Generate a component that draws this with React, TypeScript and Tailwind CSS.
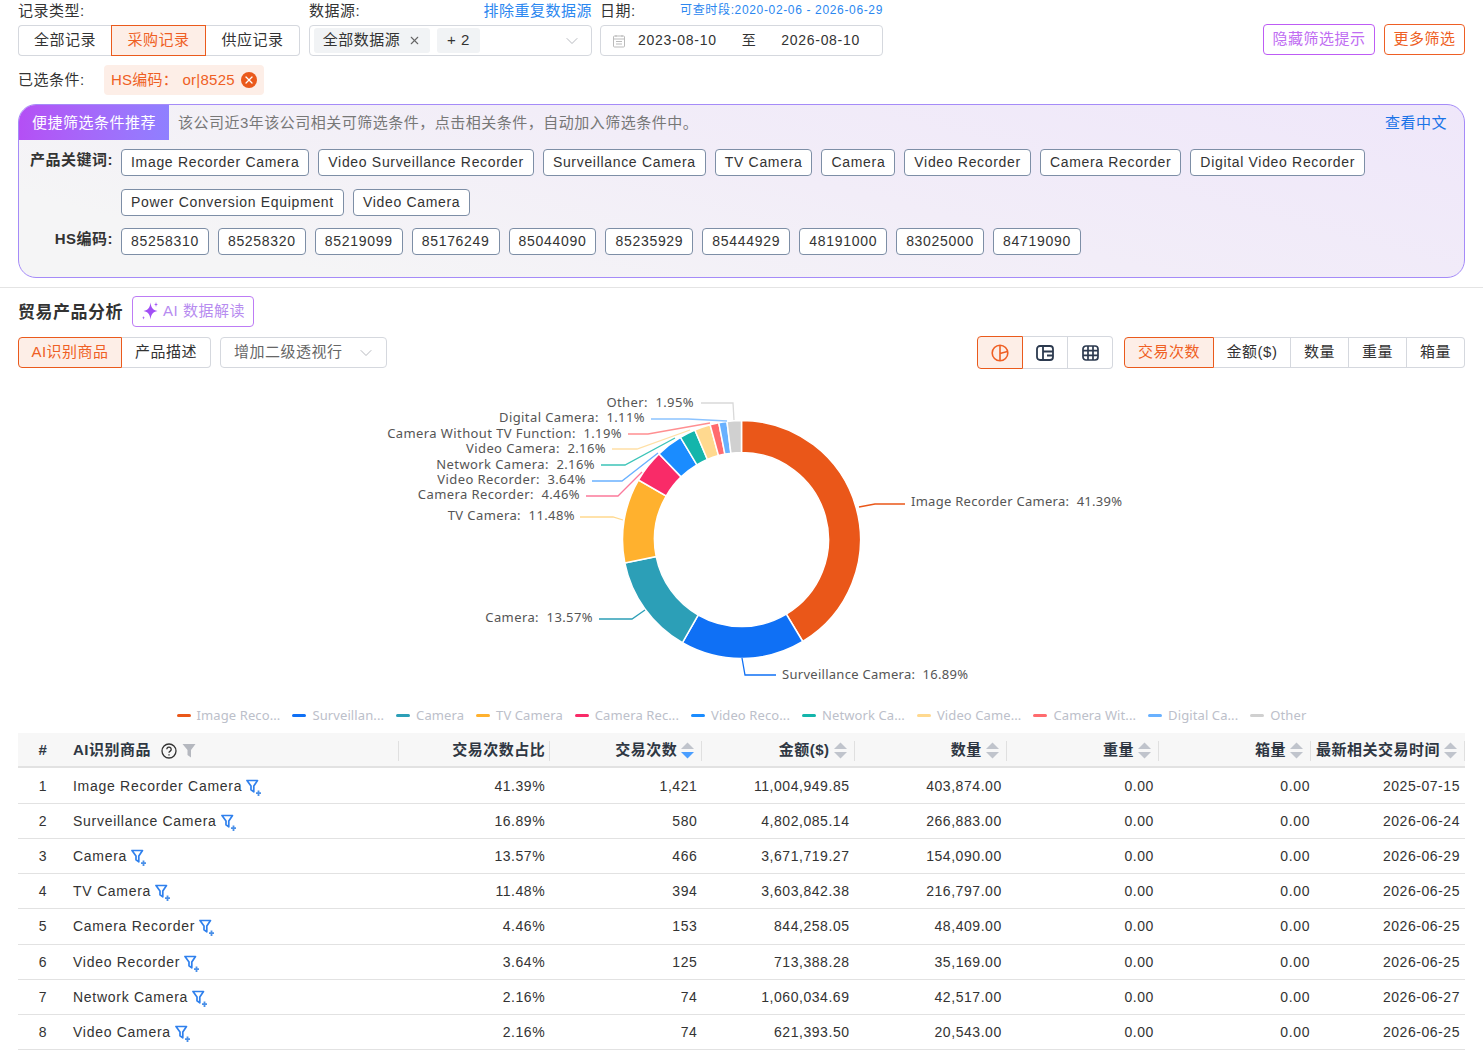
import React from 'react';
import { ChevronDown, X } from 'lucide-react';

const slices = [
  { name: 'Image Recorder Camera', short: 'Image Reco...', pct: 41.39, color: '#ea5719' },
  { name: 'Surveillance Camera', short: 'Surveillan...', pct: 16.89, color: '#0f70f5' },
  { name: 'Camera', short: 'Camera', pct: 13.57, color: '#2c9fb7' },
  { name: 'TV Camera', short: 'TV Camera', pct: 11.48, color: '#ffb12e' },
  { name: 'Camera Recorder', short: 'Camera Rec...', pct: 4.46, color: '#f92b68' },
  { name: 'Video Recorder', short: 'Video Reco...', pct: 3.64, color: '#1a8cff' },
  { name: 'Network Camera', short: 'Network Ca...', pct: 2.16, color: '#14b5ab' },
  { name: 'Video Camera', short: 'Video Came...', pct: 2.16, color: '#ffd98f' },
  { name: 'Camera Without TV Function', short: 'Camera Wit...', pct: 1.19, color: '#ff6b6e' },
  { name: 'Digital Camera', short: 'Digital Ca...', pct: 1.11, color: '#69b1ff' },
  { name: 'Other', short: 'Other', pct: 1.95, color: '#d0d0d0' },
];

// label text anchor + leader line, in page coordinates (svg viewBox starts at y=369)
const labels = [
  { i: 0, x: 911, y: 506, anchor: 'start', line: '905,504 875,504 859,507', color: '#ea5719' },
  { i: 1, x: 782, y: 679, anchor: 'start', line: '776,675 745,675 742,658', color: '#0f70f5' },
  { i: 2, x: 593, y: 622, anchor: 'end', line: '599,619 632,619 645,610', color: '#2c9fb7' },
  { i: 3, x: 575, y: 520, anchor: 'end', line: '580,517 613,517 623,520', color: '#ffd98f' },
  { i: 4, x: 580, y: 499, anchor: 'end', line: '586,496 618,496 642,472', color: '#fb7a9b' },
  { i: 5, x: 586, y: 484, anchor: 'end', line: '592,481 622,481 658,453', color: '#69b1ff' },
  { i: 6, x: 595, y: 469, anchor: 'end', line: '601,465 625,465 675,438', color: '#3cc4b8' },
  { i: 7, x: 606, y: 453, anchor: 'end', line: '612,449 637,449 690,430', color: '#ffe0a6' },
  { i: 8, x: 622, y: 438, anchor: 'end', line: '628,434 648,434 710,423', color: '#ff8f91' },
  { i: 9, x: 645, y: 422, anchor: 'end', line: '651,419 688,419 727,421', color: '#8cc3ff' },
  { i: 10, x: 694, y: 407, anchor: 'end', line: '701,403 733,403 734,420', color: '#d9d9d9' },
];

const kwRow1 = ['Image Recorder Camera', 'Video Surveillance Recorder', 'Surveillance Camera', 'TV Camera', 'Camera', 'Video Recorder', 'Camera Recorder', 'Digital Video Recorder'];
const kwRow2 = ['Power Conversion Equipment', 'Video Camera'];
const hsCodes = ['85258310', '85258320', '85219099', '85176249', '85044090', '85235929', '85444929', '48191000', '83025000', '84719090'];

const rows = [
  ['1', 'Image Recorder Camera', '41.39%', '1,421', '11,004,949.85', '403,874.00', '0.00', '0.00', '2025-07-15'],
  ['2', 'Surveillance Camera', '16.89%', '580', '4,802,085.14', '266,883.00', '0.00', '0.00', '2026-06-24'],
  ['3', 'Camera', '13.57%', '466', '3,671,719.27', '154,090.00', '0.00', '0.00', '2026-06-29'],
  ['4', 'TV Camera', '11.48%', '394', '3,603,842.38', '216,797.00', '0.00', '0.00', '2026-06-25'],
  ['5', 'Camera Recorder', '4.46%', '153', '844,258.05', '48,409.00', '0.00', '0.00', '2026-06-25'],
  ['6', 'Video Recorder', '3.64%', '125', '713,388.28', '35,169.00', '0.00', '0.00', '2026-06-25'],
  ['7', 'Network Camera', '2.16%', '74', '1,060,034.69', '42,517.00', '0.00', '0.00', '2026-06-27'],
  ['8', 'Video Camera', '2.16%', '74', '621,393.50', '20,543.00', '0.00', '0.00', '2026-06-25'],
];

const sortCols = ['交易次数', '金额($)', '数量', '重量', '箱量', '最新相关交易时间'];

const marks = [
  [815, 125], [525, 350], [820, 350], [265, 520], [525, 525], [820, 515], [1095, 520], [1370, 520],
  [270, 685], [545, 685], [1100, 685], [1375, 685], [270, 875], [545, 875], [830, 865], [1100, 875], [1370, 875],
];

function arc(start: number, end: number) {
  const cx = 741.5, cy = 539.5, r1 = 119, r0 = 87;
  const p = (r: number, a: number) => {
    const t = (a / 100) * Math.PI * 2;
    return `${(cx + r * Math.sin(t)).toFixed(2)} ${(cy - r * Math.cos(t)).toFixed(2)}`;
  };
  const large = end - start > 50 ? 1 : 0;
  return `M${p(r1, start)}A${r1} ${r1} 0 ${large} 1 ${p(r1, end)}L${p(r0, end)}A${r0} ${r0} 0 ${large} 0 ${p(r0, start)}Z`;
}

function FilterPlus() {
  return (
    <svg width="16" height="18" viewBox="0 0 16 18" className="ml-[4px] mt-[3px] shrink-0">
      <path d="M1 1.5h10.5L7.8 7v5.8L5 10.8V7Z" fill="none" stroke="#2f80ed" strokeWidth="1.7" strokeLinejoin="round" />
      <path d="M12.5 11.5v5.5M10 14.2h5" stroke="#4a90e8" strokeWidth="1.8" />
    </svg>
  );
}

function SortCaret({ active }: { active?: boolean }) {
  return (
    <svg width="13" height="17" viewBox="0 0 13 17" className="shrink-0">
      <path d="M6.5 0.5 13 7H0Z" fill="#c0c4cc" />
      <path d="M6.5 16.5 0 10h13Z" fill={active ? '#4a9eff' : '#c0c4cc'} />
    </svg>
  );
}

function Tag({ children, code }: { children: React.ReactNode; code?: boolean }) {
  return (
    <span className={`flex h-[27px] items-center whitespace-nowrap rounded-[4px] border border-[#7d8ea6] bg-white px-[9px] text-[14px] text-[#333] ${code ? 'tracking-[0.7px]' : 'tracking-[0.68px]'}`}>
      {children}
    </span>
  );
}

export default function App() {
  let acc = 0;
  return (
    <div
      className="relative h-[1055px] overflow-hidden bg-white text-[14px] tracking-[0.5px] text-[#333]"
      style={{ fontFamily: '"Liberation Sans", "Noto Sans CJK SC", sans-serif' }}
    >
      {/* filter row */}
      <div className="flex px-[18px]">
        <div className="w-[282px]">
          <div className="h-[25px] pt-[1px] text-[15px] leading-[20px]">记录类型:</div>
          <div className="flex h-[31px] text-[15px]">
            <div className="flex w-[93px] items-center justify-center rounded-l-[4px] border border-r-0 border-[#d5d8de]">全部记录</div>
            <div className="flex w-[95px] items-center justify-center border border-[#ea5a1c] bg-[#fdeee7] text-[#ef5f24]">采购记录</div>
            <div className="flex w-[94px] items-center justify-center rounded-r-[4px] border border-l-0 border-[#d5d8de]">供应记录</div>
          </div>
        </div>
        <div className="ml-[9px] w-[283px]">
          <div className="flex h-[25px] justify-between pt-[1px] text-[15px] leading-[20px]">
            <span>数据源:</span>
            <span className="text-[#2b87f0]">排除重复数据源</span>
          </div>
          <div className="flex h-[31px] items-center rounded-[4px] border border-[#d5d8de] pl-[4px] pr-[9px] text-[15px]">
            <span className="flex h-[25px] w-[116px] items-center justify-center gap-[8px] rounded-[3px] bg-[#f1f3f5]">
              全部数据源 <X size={13} className="text-[#666]" />
            </span>
            <span className="ml-[7px] flex h-[25px] w-[43px] items-center justify-center rounded-[3px] bg-[#f1f3f5]">+ 2</span>
            <ChevronDown size={20} strokeWidth={1} className="ml-auto text-[#a8abb2]" />
          </div>
        </div>
        <div className="ml-[8px] w-[283px]">
          <div className="flex h-[25px] items-start justify-between text-[15px] leading-[20px]">
            <span className="pt-[1px]">日期:</span>
            <span className="text-[12px] tracking-[0.65px] text-[#2b87f0]">可查时段:2020-02-06 - 2026-06-29</span>
          </div>
          <div className="flex h-[31px] items-center rounded-[4px] border border-[#d5d8de] pl-[11px] tracking-[0.7px]">
            <svg width="14" height="14" viewBox="0 0 14 14" fill="none" stroke="#bbb" strokeWidth="1">
              <rect x="1.5" y="2" width="11" height="11" rx="1" />
              <path d="M1.5 5h11M4 7.5h6M4 10h6M4 1v2M10 1v2" />
            </svg>
            <span className="ml-[12px]">2023-08-10</span>
            <span className="ml-[25px]">至</span>
            <span className="ml-[25px]">2026-08-10</span>
          </div>
        </div>
        <div className="ml-auto mt-[24px] flex h-[31px] gap-[9px] text-[15px]">
          <span className="flex w-[112px] items-center justify-center rounded-[4px] border border-[#bd5cf5] text-[#c06df2]">隐藏筛选提示</span>
          <span className="flex w-[81px] items-center justify-center rounded-[4px] border border-[#ee5f24] text-[#ee5f24]">更多筛选</span>
        </div>
      </div>

      {/* selected */}
      <div className="ml-[18px] mt-[9px] flex h-[30px] items-center text-[15px]">
        <span className="w-[86px]">已选条件:</span>
        <span className="flex h-[30px] w-[160px] items-center gap-[6px] rounded-[4px] bg-[#fdeee7] pl-[7px] tracking-[0.25px] text-[#ef5f24]">
          <span className="whitespace-pre">HS编码： or|8525</span>
          <span className="flex h-[16px] w-[16px] items-center justify-center rounded-full bg-[#ea5a1c]">
            <X size={12} strokeWidth={2.5} className="text-white" />
          </span>
        </span>
      </div>

      {/* recommend panel */}
      <div className="mx-[18px] mt-[9px] h-[174px] overflow-hidden rounded-[18px] border border-[#a58bf8] bg-[linear-gradient(195deg,#efe7fa_0%,#f2edf8_45%,#f5f5f6_85%)]">
        <div className="flex h-[35px] items-center pt-[1px]">
          <div className="-mt-[1px] flex h-[35px] w-[150px] items-center justify-center bg-gradient-to-r from-[#b44ff5] to-[#8f80ff] pt-[1px] text-[15px] text-white">便捷筛选条件推荐</div>
          <span className="ml-[9px] text-[15px] text-[#777]">该公司近3年该公司相关可筛选条件，点击相关条件，自动加入筛选条件中。</span>
          <span className="ml-auto mr-[17px] text-[15px] text-[#1a73e8]">查看中文</span>
        </div>
        <div className="mt-[9px] flex">
          <div className="w-[94px] text-right text-[15px] font-bold">产品关键词:</div>
          <div className="ml-[8px] flex flex-col gap-[13px]">
            <div className="flex gap-[9px]">{kwRow1.map((k) => <Tag key={k}>{k}</Tag>)}</div>
            <div className="flex gap-[9px]">{kwRow2.map((k) => <Tag key={k}>{k}</Tag>)}</div>
          </div>
        </div>
        <div className="mt-[12px] flex">
          <div className="w-[94px] text-right text-[15px] font-bold">HS编码:</div>
          <div className="ml-[8px] flex gap-[9px]">
            {hsCodes.map((k) => <Tag key={k} code>{k}</Tag>)}
          </div>
        </div>
      </div>

      <div className="mt-[9px] h-px bg-[#e4e4e4]" />

      {/* section head */}
      <div className="ml-[18px] mt-[7.5px] flex h-[32.5px] items-start">
        <span className="pt-[1px] text-[17px] font-bold leading-[32px]">贸易产品分析</span>
        <span className="ml-[9px] flex h-[31px] w-[122px] items-center justify-center gap-[4px] rounded-[4px] border border-[#bd7cf5] text-[15px] text-[#b78cf0]">
          <svg width="18" height="20" viewBox="0 0 18 20">
            <path d="M9.5 1.5C10.3 7 11.5 8.8 16.5 10 11.5 11.2 10.3 13 9.5 18.5 8.7 13 7.5 11.2 2.5 10 7.5 8.8 8.7 7 9.5 1.5Z" fill="#a14ff5" />
            <path d="M15 1l.5 2 1.5.5-1.5.5-.5 2-.5-2-1.5-.5 1.5-.5ZM2.5 15l.4 1.4 1.1.4-1.1.4-.4 1.3-.4-1.3-1-.4 1-.4Z" fill="#a14ff5" />
          </svg>
          AI 数据解读
        </span>
      </div>

      {/* toolbar */}
      <div className="mx-[18px] mt-[9px] flex h-[32px] items-start">
        <div className="flex h-[31px] text-[15px]">
          <span className="flex w-[104px] items-center justify-center rounded-l-[4px] border border-[#ea5a1c] bg-[#fdeee7] text-[#ef5f24]">AI识别商品</span>
          <span className="flex w-[89px] items-center justify-center rounded-r-[4px] border border-l-0 border-[#d5d8de]">产品描述</span>
        </div>
        <div className="ml-[9px] flex h-[31px] w-[167px] items-center rounded-[4px] border border-[#d5d8de] pl-[13px] pr-[10px] text-[15px] text-[#666]">
          增加二级透视行
          <ChevronDown size={20} strokeWidth={1} className="ml-auto text-[#a8abb2]" />
        </div>
        <div className="-mt-[1px] ml-auto flex h-[33px]">
          <span className="flex w-[46px] items-center justify-center rounded-l-[4px] border border-[#ea5a1c] bg-[#fdeee7]">
            <svg width="18" height="18" viewBox="0 0 18 18" fill="none" stroke="#ef5f24" strokeWidth="1.6">
              <circle cx="9" cy="9" r="7.8" />
              <path d="M9 1.2V16.8M9 9.5l7.4-2" />
            </svg>
          </span>
          <span className="flex w-[45px] items-center justify-center border-y border-r border-[#d5d8de]">
            <svg width="18" height="16" viewBox="0 0 18 16" fill="none" stroke="#2c3a4f" strokeWidth="1.8">
              <rect x="1" y="1" width="16" height="14" rx="3" />
              <path d="M7 1V15M7 6.5h10M11 10.5h6" />
            </svg>
          </span>
          <span className="flex w-[45px] items-center justify-center rounded-r-[4px] border-y border-r border-[#d5d8de]">
            <svg width="17" height="16" viewBox="0 0 17 16" fill="none" stroke="#2c3a4f" strokeWidth="1.7">
              <rect x="1" y="1" width="15" height="14" rx="3" />
              <path d="M6 1V15M11 1V15M1 5.7h15M1 10.3h15" />
            </svg>
          </span>
          <div className="ml-[11px] mt-[1px] flex h-[31px] text-[15px]">
            <span className="flex w-[90px] items-center justify-center rounded-l-[4px] border border-[#ea5a1c] bg-[#fdeee7] text-[#ef5f24]">交易次数</span>
            <span className="flex w-[77px] items-center justify-center border-y border-r border-[#d5d8de]">金额($)</span>
            <span className="flex w-[58px] items-center justify-center border-y border-r border-[#d5d8de]">数量</span>
            <span className="flex w-[58px] items-center justify-center border-y border-r border-[#d5d8de]">重量</span>
            <span className="flex w-[58px] items-center justify-center rounded-r-[4px] border-y border-r border-[#d5d8de]">箱量</span>
          </div>
        </div>
      </div>

      {/* chart */}
      <svg width="1483" height="335" viewBox="0 369 1483 335" className="block" style={{ fontFamily: '"Noto Sans", sans-serif' }}>
        {slices.map((s) => {
          const start = acc;
          acc += s.pct;
          return <path key={s.name} d={arc(start, acc)} fill={s.color} stroke="#fff" strokeWidth="1.5" />;
        })}
        {labels.map((l) => (
          <g key={l.i}>
            <polyline points={l.line} fill="none" stroke={l.color} strokeWidth="1.3" />
            <text
              x={l.x}
              y={l.y}
              textAnchor={l.anchor as 'start' | 'end'}
              className={`fill-[#555] text-[13px] ${l.anchor === 'end' ? 'tracking-[0.4px]' : 'tracking-[0.28px]'}`}
              xmlSpace="preserve"
            >
              {`${slices[l.i].name}:  ${slices[l.i].pct.toFixed(2)}%`}
            </text>
          </g>
        ))}
      </svg>

      {/* legend */}
      <div className="mb-[6px] flex h-[23px] items-center justify-center gap-[12px] text-[13px] tracking-[0.1px] text-[#bcc0ca]" style={{ fontFamily: '"Noto Sans", sans-serif' }}>
        {slices.map((s) => (
          <span key={s.name} className="flex items-center gap-[6px]">
            <span className="h-[2.5px] w-[14px] rounded-full" style={{ background: s.color }} />
            {s.short}
          </span>
        ))}
      </div>

      {/* table */}
      <div className="mx-[18px]">
        <div className="grid h-[35px] grid-cols-[50px_330px_repeat(6,152.2px)_1fr] items-center border-b-2 border-[#e2e2e2] bg-[#f7f7f7] pt-[2px] text-[15px] font-bold text-[#2f3743]">
          <div className="text-center">#</div>
          <div className="flex items-center pl-[5px]">
            AI识别商品
            <svg width="16" height="16" viewBox="0 0 16 16" fill="none" stroke="#333" strokeWidth="1.3" className="ml-[10px]">
              <circle cx="8" cy="8" r="7" />
              <path d="M5.8 6.2a2.2 2.2 0 1 1 3.4 1.9c-.8.5-1.2.9-1.2 1.7M8 11.2v1.2" />
            </svg>
            <svg width="14" height="15" viewBox="0 0 14 15" className="ml-[5px]">
              <path d="M0.5 1h13L9 7v7.5L5.5 12V7Z" fill="#b5b8bf" />
            </svg>
          </div>
          <div className="flex h-[20px] items-center justify-end gap-[4px] border-l border-[#e0e0e0]">
            交易次数占比<span className="h-[20px] w-px bg-[#e0e0e0]" />
          </div>
          {sortCols.map((c, i) => (
            <div key={c} className="flex h-[20px] items-center justify-end gap-[4px]">
              {c}
              <SortCaret active={i === 0} />
              <span className="ml-[3px] h-[20px] w-px bg-[#e0e0e0]" />
            </div>
          ))}
        </div>
        {rows.map((r, ri) => (
          <div key={r[0]} className={`grid grid-cols-[50px_330px_repeat(6,152.2px)_1fr] items-center border-b border-[#e2e2e2] pt-[1px] text-[#333] ${ri === 0 ? 'mt-[1px] h-[35px]' : 'h-[35.15px]'}`}>
            <div className="text-center">{r[0]}</div>
            <div className="flex items-center pl-[5px] tracking-[0.72px]">{r[1]}<FilterPlus /></div>
            {r.slice(2).map((v, i) => (
              <div key={i} className={i === 5 ? 'pr-[1px] text-right tracking-[0.65px]' : 'pr-[5px] text-right tracking-[0.55px]'}>{v}</div>
            ))}
          </div>
        ))}
      </div>

      {/* watermark */}
      {marks.map(([x, y], i) => (
        <span
          key={i}
          className="pointer-events-none absolute -rotate-[25deg] text-[20px] text-black/[0.025]"
          style={{ left: x, top: y }}
        >
          TOPEASE
        </span>
      ))}
    </div>
  );
}
